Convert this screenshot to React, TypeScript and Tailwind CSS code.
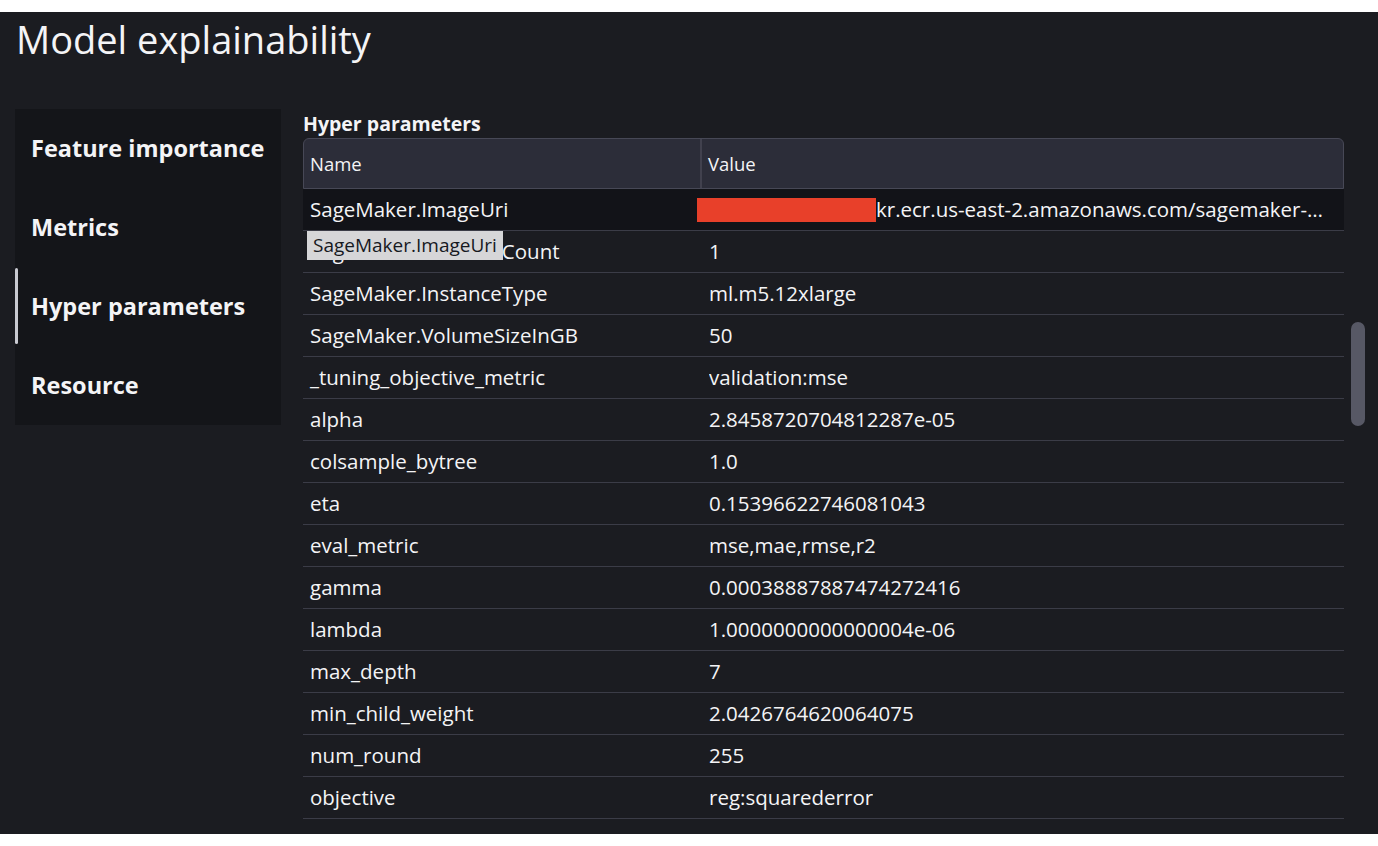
const tabs = ['Feature importance', 'Metrics', 'Hyper parameters', 'Resource']

const params: [string, string][] = [
    ['SageMaker.ImageUri', 'kr.ecr.us-east-2.amazonaws.com/sagemaker-…'],
    ['SageMaker.InstanceCount', '1'],
    ['SageMaker.InstanceType', 'ml.m5.12xlarge'],
    ['SageMaker.VolumeSizeInGB', '50'],
    ['_tuning_objective_metric', 'validation:mse'],
    ['alpha', '2.8458720704812287e-05'],
    ['colsample_bytree', '1.0'],
    ['eta', '0.15396622746081043'],
    ['eval_metric', 'mse,mae,rmse,r2'],
    ['gamma', '0.00038887887474272416'],
    ['lambda', '1.0000000000000004e-06'],
    ['max_depth', '7'],
    ['min_child_weight', '2.0426764620064075'],
    ['num_round', '255'],
    ['objective', 'reg:squarederror'],
]

export default function App() {
    return (
        <div className="flex flex-col h-screen w-full bg-white overflow-hidden" style={{fontFamily: '"Open Sans", "Noto Sans", sans-serif'}}>
            <div className="h-3 shrink-0 bg-white" />
            <div className="flex flex-col flex-1 min-h-0 bg-[#1b1c21] text-[#f4f4f6] overflow-hidden">
                <h1 className="pl-4 pt-[5px] text-[38px] leading-[44px] font-normal">Model explainability</h1>
                <div className="flex flex-1 min-h-0 mt-[48px] pl-[15px] pr-[13px]">
                    <Sidebar active="Hyper parameters" />
                    <ParamsTable />
                    <div className="w-[14px] ml-[7px] pt-[213px] shrink-0">
                        <div className="h-[104px] w-[14px] rounded-full bg-[#575865]" />
                    </div>
                </div>
            </div>
            <div className="h-3 shrink-0 bg-white" />
        </div>
    )
}

function Sidebar({active}: {active: string}) {
    return (
        <div className="flex flex-col w-[266px] h-[316px] bg-[#141519] shrink-0">
            {tabs.map((tab) => (
                <div key={tab} className="relative flex items-center h-[79px] pl-[16px] text-[23.5px] font-bold">
                    {tab === active && (
                        <div className="absolute left-0 top-[1px] w-[3px] h-[76px] bg-[#c9cad1] rounded-sm" />
                    )}
                    {tab}
                </div>
            ))}
        </div>
    )
}

function ParamsTable() {
    return (
        <div className="flex flex-col flex-1 min-w-0 ml-[22px]">
            <h2 className="text-[19.5px] leading-[29px] font-bold">Hyper parameters</h2>
            <div className="relative flex flex-col">
                <div className="flex h-[51px] bg-[#2c2d39] border border-[#474856] rounded-t-md text-[18.5px] font-medium">
                    <div className="flex items-center w-[398px] px-[6px] border-r-2 border-[#55566380]">Name</div>
                    <div className="flex items-center flex-1 px-[6px]">Value</div>
                </div>
                {params.map(([name, value], i) => (
                    <div key={name} className={`flex h-[42px] border-b border-[#3b3c47] text-[20.5px] ${i === 0 ? 'bg-[#121318]' : ''}`}>
                        <div className="flex items-center w-[399px] pl-[7px] whitespace-nowrap overflow-hidden">{name}</div>
                        <div className="flex items-center flex-1 min-w-0 pl-[7px] whitespace-nowrap">
                            {i === 0 && <span className="inline-block w-[179px] h-[24px] -ml-[12px] bg-[#e8402a] shrink-0" />}
                            <span className="overflow-hidden">{value}</span>
                        </div>
                    </div>
                ))}
                <div className="absolute left-[4px] top-[93px] h-[29px] px-[6px] flex items-center bg-[#d6d6d8] text-[#16191f] text-[19px]">
                    SageMaker.ImageUri
                </div>
            </div>
        </div>
    )
}
